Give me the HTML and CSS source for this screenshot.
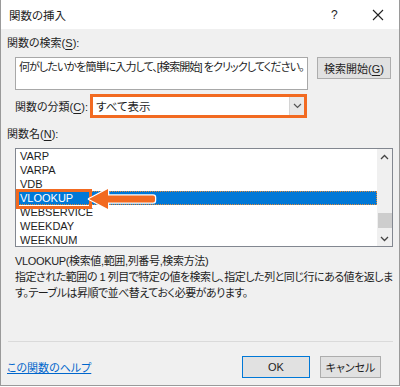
FILE: index.html
```html
<!DOCTYPE html>
<html lang="ja">
<head>
    <meta charset="UTF-8">
    <meta name="viewport" content="width=device-width, initial-scale=1.0">
    <title>関数の挿入</title>
    <link rel="stylesheet" href="styles.css">
</head>

<body>
    <div class="dialog">
        <div class="titlebar">
            <span class="title">関数の挿入</span>
            <span class="tb-help">?</span>
            <span class="tb-close">
                <svg width="12" height="12" viewBox="0 0 12 12"><path d="M1 1 L11 11 M11 1 L1 11" stroke="#222" stroke-width="1.1" fill="none"/></svg>
            </span>
        </div>

        <div class="content">
            <div class="lbl">関数の検索(<u>S</u>):</div>
            <div class="search-row">
                <div class="search-box">何がしたいかを簡単に入力して、[検索開始] をクリックしてください。</div>
                <button class="btn btn-search">検索開始(<u>G</u>)</button>
            </div>

            <div class="cat-row">
                <span class="cat-lbl">関数の分類(<u>C</u>):</span>
                <div class="combo">
                    <span class="combo-text">すべて表示</span>
                    <span class="combo-btn">
                        <svg width="9" height="6" viewBox="0 0 9 6"><path d="M1 1 L4.5 4.5 L8 1" stroke="#555" stroke-width="1.2" fill="none"/></svg>
                    </span>
                </div>
            </div>

            <div class="lbl lbl-names">関数名(<u>N</u>):</div>
            <div class="listbox">
                <ul class="items">
                    <li>VARP</li>
                    <li>VARPA</li>
                    <li>VDB</li>
                    <li class="sel">VLOOKUP</li>
                    <li>WEBSERVICE</li>
                    <li>WEEKDAY</li>
                    <li>WEEKNUM</li>
                </ul>
                <div class="vscroll">
                    <svg class="sc-up" width="9" height="6" viewBox="0 0 9 6"><path d="M1 5 L4.5 1.5 L8 5" stroke="#444" stroke-width="1.3" fill="none"/></svg>
                    <div class="sc-thumb"></div>
                    <svg class="sc-down" width="9" height="6" viewBox="0 0 9 6"><path d="M1 1 L4.5 4.5 L8 1" stroke="#444" stroke-width="1.3" fill="none"/></svg>
                </div>
                <!-- 注釈: 選択行の枠と矢印 -->
                <div class="mark-box"></div>
                <svg class="mark-arrow" width="150" height="30" viewBox="0 0 150 30">
                    <path d="M73 14 L92 4 L92 10.5 L137 10.5 Q139 10.5 139 12.5 L139 15.5 Q139 17.5 137 17.5 L92 17.5 L92 24 Z"
                          fill="#f26a21" stroke="#fff" stroke-width="2.5" stroke-linejoin="round" paint-order="stroke"/>
                </svg>
            </div>

            <div class="syntax">VLOOKUP(検索値,範囲,列番号,検索方法)</div>
            <div class="desc">
                <div class="line">指定された範囲の 1 列目で特定の値を検索し、指定した列と同じ行にある値を返しま</div>
                <div class="line">す。テーブルは昇順で並べ替えておく必要があります。</div>
            </div>

            <div class="sep"></div>

            <div class="footer">
                <a class="help-link" href="#">この関数のヘルプ</a>
                <button class="btn btn-ok">OK</button>
                <button class="btn btn-cancel">キャンセル</button>
            </div>
        </div>
    </div>
</body>
</html>
```

FILE: styles.css
```css
body {
    margin: 0;
    background: #ffffff;
    font-family: "Liberation Sans", "Noto Sans CJK JP", sans-serif;
    font-size: 11px;
    color: #1e1e1e;
    font-feature-settings: "palt";
}
u {
    text-decoration-thickness: 1px;
    text-underline-offset: 2px;
}
.dialog {
    width: 398px;
    height: 385px;
    border: 1px solid #9a9a9a;
    border-top: none;
    background: #f0f0f0;
    display: flex;
    flex-direction: column;
}
.titlebar {
    height: 29px;
    background: #ffffff;
    display: flex;
    align-items: center;
    padding-left: 8px;
}
.title {
    font-size: 11.5px;
    flex: 1;
}
.tb-help {
    width: 10px;
    font-size: 12px;
    margin-right: 31px;
}
.tb-close {
    width: 12px;
    height: 12px;
    margin-right: 15px;
    display: flex;
}
.content {
    padding: 0 6px;
    flex: 1;
    display: flex;
    flex-direction: column;
}
.lbl {
    line-height: 18px;
    margin-top: 5px;
}
.search-row {
    display: flex;
    align-items: flex-start;
    margin: 5px 0 0 8px;
}
.search-box {
    width: 288px;
    height: 30px;
    border: 1px solid #a8a8a8;
    background: #ffffff;
    padding: 1px 0 0 3px;
    line-height: 16px;
    letter-spacing: -0.9px;
    white-space: nowrap;
    overflow: hidden;
}
.btn {
    font-family: "Liberation Sans", "Noto Sans CJK JP", sans-serif;
    font-size: 11px;
    color: #1e1e1e;
    background: #e1e1e1;
    border: 1px solid #adadad;
    height: 22px;
    padding: 0;
    white-space: nowrap;
    font-feature-settings: "palt";
}
.btn-search {
    width: 74px;
    margin-left: 9px;
}
.cat-row {
    display: flex;
    align-items: center;
    margin: 4px 0 0 8px;
    height: 24px;
}
.cat-lbl {
    width: 75px;
}
.combo {
    width: 211px;
    height: 18px;
    border: 3px solid #f26a21;
    background: #ffffff;
    display: flex;
    align-items: center;
}
.combo-text {
    flex: 1;
    padding-left: 3px;
    font-size: 11.5px;
}
.combo-btn {
    width: 14px;
    height: 18px;
    background: #e8e8e8;
    border-left: 1px solid #d4d4d4;
    display: flex;
    align-items: center;
    justify-content: center;
}
.lbl-names {
    margin-top: 7px;
}
.listbox {
    position: relative;
    margin: 5px 0 0 8px;
    width: 376px;
    height: 97px;
    border: 1px solid #828790;
    background: #ffffff;
    display: flex;
}
.items {
    list-style: none;
    margin: 0;
    padding: 0 0 0 1px;
    flex: 1;
}
.items li {
    height: 14px;
    line-height: 14px;
    padding-left: 3px;
    font-size: 11px;
}
.items li.sel {
    background: #0078d7;
    color: #ffffff;
    outline: 1px dotted #e08a3a;
    outline-offset: -1px;
}
.vscroll {
    width: 15px;
    background: #f0f0f0;
    display: flex;
    flex-direction: column;
    align-items: center;
}
.sc-up {
    margin-top: 5px;
}
.sc-thumb {
    width: 14px;
    height: 15px;
    background: #cdcdcd;
    margin-top: 53px;
}
.sc-down {
    margin-top: 8px;
}
.mark-box {
    position: absolute;
    left: 0;
    top: 40px;
    width: 70px;
    height: 14px;
    border: 3px solid #f26a21;
}
.mark-arrow {
    position: absolute;
    left: 0;
    top: 36px;
}
.syntax {
    margin: 6px 0 0 8px;
    line-height: 16px;
    letter-spacing: -0.35px;
}
.desc {
    margin-left: 8px;
    line-height: 16px;
    letter-spacing: -0.5px;
    white-space: nowrap;
}
.sep {
    height: 1px;
    background: #dadada;
    margin: 40px 0 0 1px;
    width: 385px;
}
.footer {
    display: flex;
    align-items: center;
    margin-top: 14px;
}
.help-link {
    color: #0066cc;
    text-decoration: underline;
    margin-right: auto;
}
.btn-ok {
    width: 68px;
    border-color: #0078d7;
}
.btn-cancel {
    width: 61px;
    margin-left: 10px;
    margin-right: 12px;
}
```
